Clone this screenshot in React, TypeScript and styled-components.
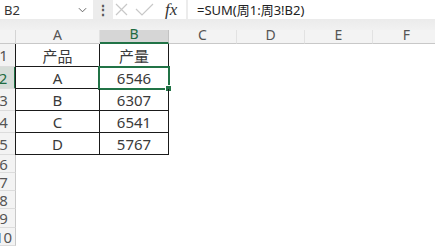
import styled, { createGlobalStyle } from 'styled-components'

const GlobalStyle = createGlobalStyle`
  html, body {
    margin: 0;
    padding: 0;
    background: #ffffff;
    overflow: hidden;
  }
  body {
    width: 435px;
    height: 249px;
    font-family: "Noto Sans", "Noto Sans CJK SC", sans-serif;
  }
`

const columns = ['A', 'B', 'C', 'D', 'E', 'F']
const colWidths = [84, 69, 68, 68, 68, 68]
const rowHeights = [23, 22, 22, 22, 22, 18, 18, 18, 19, 18]

const data: string[][] = [
  ['产品', '产量'],
  ['A', '6546'],
  ['B', '6307'],
  ['C', '6541'],
  ['D', '5767']
]

const selected = { row: 2, col: 1 }

const App = () => {
  return (
    <>
      <GlobalStyle />
      <Window>
        <FormulaBar>
          <NameBox>
            <span>B2</span>
            <Chevron viewBox="0 0 10 6">
              <path d="M1 1 L5 5 L9 1" fill="none" stroke="#555" strokeWidth="1" />
            </Chevron>
          </NameBox>
          <Grip>⋮</Grip>
          <ActionBox>
            <svg width="13" height="13" viewBox="0 0 13 13">
              <path d="M1 1 L12 12 M12 1 L1 12" stroke="#c8c8c8" strokeWidth="1.2" />
            </svg>
            <svg width="19" height="13" viewBox="0 0 19 13">
              <path d="M1 6 L7 12 L18 1" fill="none" stroke="#c8c8c8" strokeWidth="1.2" />
            </svg>
            <Fx>fx</Fx>
          </ActionBox>
          <FormulaInput>=SUM(周1:周3!B2)</FormulaInput>
        </FormulaBar>
        <Band />
        <Sheet $cols={colWidths} $rows={rowHeights}>
          <Corner />
          {columns.map((c, i) => (
            <ColHeader key={c} $active={i === selected.col}>
              {c}
            </ColHeader>
          ))}
          {rowHeights.map((_, r) => (
            <Row key={r} r={r} />
          ))}
        </Sheet>
      </Window>
    </>
  )
}

const Row = ({ r }: { r: number }) => {
  const rowNo = r + 1
  return (
    <>
      <RowHeader $active={rowNo === selected.row}>{rowNo}</RowHeader>
      {columns.map((_, c) => {
        const value = data[r]?.[c]
        const inTable = r < data.length && c < 2
        const isSel = rowNo === selected.row && c === selected.col
        return (
          <Cell key={c} $table={inTable} $firstCol={c === 0}>
            {value}
            {isSel && (
              <Selection>
                <Handle />
              </Selection>
            )}
          </Cell>
        )
      })}
    </>
  )
}

export default App

const Window = styled.div`
  width: 435px;
  height: 249px;
  overflow: hidden;
  background: #ffffff;
`

const FormulaBar = styled.div`
  display: flex;
  align-items: stretch;
  height: 19px;
  background: #ececec;
`

const NameBox = styled.div`
  width: 93px;
  box-sizing: border-box;
  background: #ffffff;
  display: flex;
  align-items: center;
  justify-content: space-between;
  padding: 0 6px 0 4px;
  font-size: 13px;
  color: #333;
`

const Chevron = styled.svg`
  width: 9px;
  height: 6px;
`

const Grip = styled.div`
  width: 20px;
  display: flex;
  align-items: center;
  justify-content: center;
  font-size: 14px;
  font-weight: bold;
  color: #555;
`

const ActionBox = styled.div`
  width: 73px;
  background: #ffffff;
  display: flex;
  align-items: center;
  gap: 7px;
  padding-left: 2px;
  box-sizing: border-box;
`

const Fx = styled.span`
  font-family: "Liberation Serif", "DejaVu Serif", serif;
  font-style: italic;
  font-size: 17px;
  color: #333;
  margin-left: 4px;
`

const FormulaInput = styled.div`
  flex: 1;
  margin-left: 2px;
  background: #ffffff;
  display: flex;
  align-items: center;
  padding-left: 9px;
  font-size: 13px;
  color: #222;
  white-space: nowrap;
`

const Band = styled.div`
  height: 11px;
  background: linear-gradient(#ebebeb, #f1f1f1);
`

const Sheet = styled.div<{ $cols: number[]; $rows: number[] }>`
  display: grid;
  margin-left: -10px;
  grid-template-columns: 26px ${({ $cols }) => $cols.map((w) => `${w}px`).join(' ')};
  grid-template-rows: 14px ${({ $rows }) => $rows.map((h) => `${h}px`).join(' ')};
`

const Corner = styled.div`
  background: #f3f3f3;
  border-right: 1px solid #d4d4d4;
  border-bottom: 1px solid #c8c8c8;
  box-sizing: border-box;
`

const ColHeader = styled.div<{ $active: boolean }>`
  box-sizing: border-box;
  background: ${({ $active }) => ($active ? '#d6d6d6' : '#f3f3f3')};
  border-right: 1px solid ${({ $active }) => ($active ? '#c2c2c2' : '#e2e2e2')};
  border-bottom: ${({ $active }) => ($active ? '2px solid #217346' : '1px solid #c8c8c8')};
  color: ${({ $active }) => ($active ? '#1e6b41' : '#555')};
  font-size: 14px;
  line-height: 14px;
  display: flex;
  justify-content: center;
  align-items: flex-end;
  padding-bottom: 1px;
`

const RowHeader = styled.div<{ $active: boolean }>`
  box-sizing: border-box;
  background: ${({ $active }) => ($active ? '#d6ddd8' : '#f3f3f3')};
  border-right: ${({ $active }) => ($active ? '2px solid #217346' : '1px solid #c8c8c8')};
  border-bottom: 1px solid #dcdcdc;
  color: ${({ $active }) => ($active ? '#1e6b41' : '#555')};
  font-size: 15px;
  display: flex;
  align-items: center;
  justify-content: center;
  padding-left: 2px;
`

const Cell = styled.div<{ $table: boolean; $firstCol: boolean }>`
  position: relative;
  box-sizing: border-box;
  display: flex;
  align-items: center;
  justify-content: center;
  font-size: 15px;
  color: #3a3a3a;
  border-right: 1px solid ${({ $table }) => ($table ? '#1a1a1a' : 'transparent')};
  border-bottom: 1px solid ${({ $table }) => ($table ? '#1a1a1a' : 'transparent')};
  ${({ $table, $firstCol }) => ($table && $firstCol ? 'border-left: 1px solid #1a1a1a; margin-left: -1px;' : '')}
`

const Selection = styled.div`
  position: absolute;
  left: -2px;
  top: -1px;
  right: -2px;
  bottom: -2px;
  border: 2px solid #217346;
  pointer-events: none;
`

const Handle = styled.div`
  position: absolute;
  right: -4px;
  bottom: -4px;
  width: 5px;
  height: 5px;
  background: #217346;
  border: 1px solid #ffffff;
`
